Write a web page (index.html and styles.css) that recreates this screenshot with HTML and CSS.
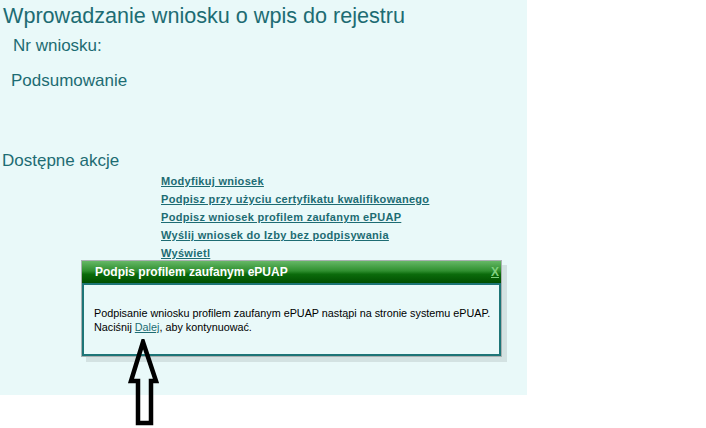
FILE: index.html
```html
<!DOCTYPE html>
<html lang="pl">
<head>
<meta charset="utf-8">
<title>Wprowadzanie wniosku</title>
<link rel="stylesheet" href="styles.css">
</head>
<body>
<div class="page">
  <h1 class="title">Wprowadzanie wniosku o wpis do rejestru</h1>
  <div class="nr">Nr wniosku:</div>
  <div class="summary">Podsumowanie</div>
  <div class="actions-label">Dostępne akcje</div>
  <ul class="actions">
    <li><a href="#">Modyfikuj wniosek</a></li>
    <li><a href="#">Podpisz przy użyciu certyfikatu kwalifikowanego</a></li>
    <li><a href="#">Podpisz wniosek profilem zaufanym ePUAP</a></li>
    <li><a href="#">Wyślij wniosek do Izby bez podpisywania</a></li>
    <li><a href="#">Wyświetl</a></li>
  </ul>

  <div class="dialog-shadow"></div>
  <div class="dialog">
    <div class="dialog-head">
      <span class="dialog-title">Podpis profilem zaufanym ePUAP</span>
      <a href="#" class="dialog-close">X</a>
    </div>
    <div class="dialog-body">
      <p>Podpisanie wniosku profilem zaufanym ePUAP nastąpi na stronie systemu ePUAP.<br>Naciśnij <a href="#">Dalej</a>, aby kontynuować.</p>
    </div>
  </div>
</div>
<svg class="arrow" width="40" height="100" viewBox="0 0 40 100">
  <polygon points="23,3 36,42 31,42 31,84 18,84 18,42 11,42" fill="none" stroke="#000" stroke-width="4.5" stroke-linejoin="miter"/>
</svg>
</body>
</html>
```

FILE: styles.css
```css
html, body {
  margin: 0;
  padding: 0;
  background: #ffffff;
}
body {
  position: relative;
  width: 706px;
  height: 428px;
  overflow: hidden;
  font-family: "Liberation Sans", Arial, sans-serif;
}
.page {
  position: relative;
  width: 527px;
  height: 395px;
  background: #e9f9f9;
  color: #1d6c73;
  overflow: hidden;
}
.title {
  margin: 0;
  padding: 3px 0 0 3px;
  font-size: 21.6px;
  font-weight: normal;
  line-height: 25px;
}
.nr {
  padding: 8px 0 0 13px;
  font-size: 17px;
  line-height: 19px;
}
.summary {
  padding: 16px 0 0 11px;
  font-size: 17px;
  line-height: 19px;
}
.actions-label {
  padding: 61px 0 0 2px;
  font-size: 17px;
  line-height: 19px;
}
.actions {
  list-style: none;
  margin: 2px 0 0 161px;
  padding: 0;
}
.actions li {
  height: 18px;
  line-height: 18px;
  font-size: 11px;
  font-weight: bold;
  letter-spacing: 0.3px;
}
.actions a {
  color: #1d6c73;
  text-decoration: underline;
}
.dialog-shadow {
  position: absolute;
  left: 86px;
  top: 265px;
  width: 421px;
  height: 97px;
  background: #d3e2e2;
}
.dialog {
  position: absolute;
  left: 81px;
  top: 260px;
  width: 419px;
  height: 95px;
  border: 1px solid #a9b1b1;
  background: #e9f9f9;
  display: flex;
  flex-direction: column;
}
.dialog-head {
  height: 22px;
  background: linear-gradient(#66b866, #2f8f2f 45%, #0b6b0b 60%, #004f00);
  display: flex;
  align-items: center;
  justify-content: space-between;
  padding: 0 2px 0 13px;
}
.dialog-title {
  color: #ffffff;
  font-size: 12px;
  font-weight: bold;
}
.dialog-close {
  color: #7fd07f;
  font-size: 12px;
  font-weight: bold;
  text-decoration: underline;
  align-self: flex-start;
  margin-top: 4px;
}
.dialog-body {
  flex: 1;
  border: 2px solid #1d7577;
  padding: 0 10px;
  display: flex;
  align-items: center;
}
.dialog-body p {
  margin: 1px 0 0 0;
  color: #000000;
  font-size: 10.8px;
  line-height: 14px;
  white-space: nowrap;
}
.dialog-body a {
  color: #1d6c73;
  text-decoration: underline;
}
.arrow {
  position: absolute;
  left: 120px;
  top: 339px;
}
```
